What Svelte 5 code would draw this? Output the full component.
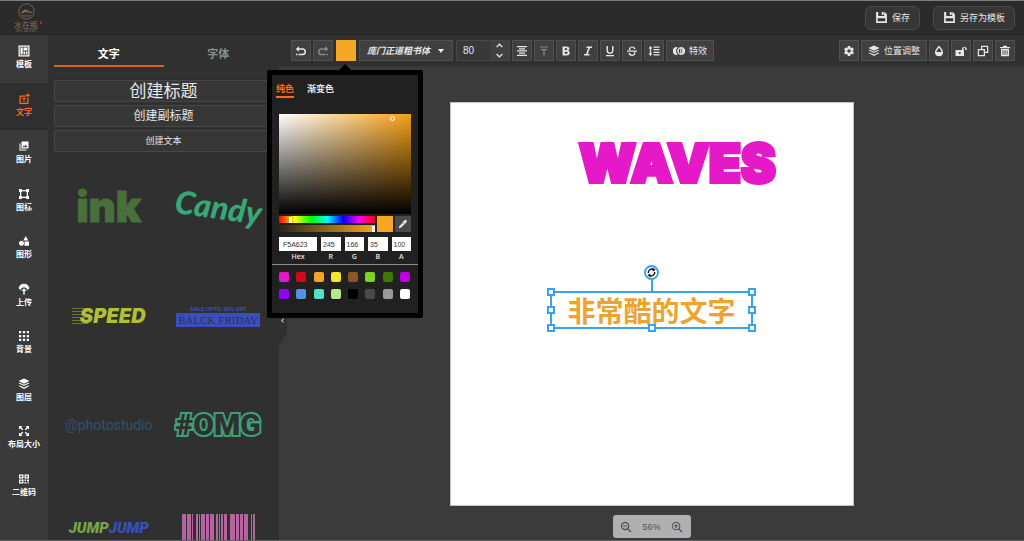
<script>
  const icons = {
    template: 'M1 1h22v22H1zM3.500 3.500v17h17v-17zM5 5h4.500v14H5zM11 5h8v6h-8zM11 13h3v6h-3zM15.500 13H19v6h-3.500z',
    text: 'M4 5h11v2.500H5.500v12h13V10H21v12H3V5zM18.500 1h2.500v2.500h2.500V6H21v2.500h-2.500V6H16V3.500h2.500zM8 9.500h8v2h-3V18h-2v-6.500H8z',
    image: 'M7 3h14v14H7zM3 7h2v12h12v2H3zM9 14.500h10l-3.500-5-2.500 3.500-1.500-2z',
    frame: 'M2 2h6v2h8V2h6v6h-2v8h2v6h-6v-2H8v2H2v-6h2V8H2zM8 6.500v1.500H6.500v8H8v1.500h8V16h1.500V8H16V6.500z',
    shapes: 'M15.500 2l5 9h-10zM7 11.500a5 5 0 1 0 .010 0zM13 13h9v8.500h-9z',
    upload: 'M12 1.500c5 0 9 3 11 8.500L19.500 14C17 10 15 8.500 12 8.500S7 10 4.500 14L1 10C3 4.500 7 1.500 12 1.500zM12 10.500l5.500 5.500h-4v7h-3v-7h-4z',
    background: 'M2 2h4.500v4.500H2zM9.750 2h4.500v4.500h-4.500zM17.500 2H22v4.500h-4.500zM2 9.750h4.500v4.500H2zM9.750 9.750h4.500v4.500h-4.500zM17.500 9.750H22v4.500h-4.500zM2 17.500h4.500V22H2zM9.750 17.500h4.500V22h-4.500zM17.500 17.500H22V22h-4.500z',
    layers: 'M12 1l11 5-11 5.500L1 6zM1 10.500l2.500-1L12 13.500l8.500-4 2.500 1-11 5.500zM1 16l2.500-1.200L12 19l8.500-4.200L23 16l-11 6z',
    resize: 'M2 2h7L6.500 4.500l4 4-2 2-4-4L2 9zM22 2v7l-2.500-2.500-4 4-2-2 4-4L15 2zM2 22v-7l2.500 2.500 4-4 2 2-4 4L9 22zM22 22h-7l2.500-2.500-4-4 2-2 4 4L22 15z',
    qr: 'M2 3h9v8H2zM4.500 5.500v3h4v-3zM13 3h9v8h-9zM15.500 5.500v3h4v-3zM2 13h9v8H2zM4.500 15.500v3h4v-3zM13 13h3v3h-3zM18 13h4v4h-4zM13 18h4v3h-4zM19 19h3v2h-3z',
    save: 'M2 2h4v7h11V2h1l4 4v16H2zM12.500 2H16v5.500h-3.500zM5 13.500v5.500h14v-5.500z',
    undo: 'M8 2.500v4h7a7 7 0 0 1 0 14H7v-3h8a4 4 0 0 0 0-8H8v4L1.500 8zM2 17.500h3v3H2z',
    redo: 'M16 2.500v4H9a7 7 0 0 0 0 14h8v-3H9a4 4 0 0 1 0-8h7v4L22.500 8zM19 17.500h3v3h-3z',
    align: 'M2 2h20v2.500H2zM6 6.300h12v2.500H6zM2 10.700h20v2.500H2zM6 15h12v2.500H6zM2 19.300h20v2.500H2z',
    textTop: 'M4 3h16v2H4zM6 8h12v2.500h-4.750V21h-2.500V10.500H6z',
    bold: 'M5 3h8.500c5.500 0 7 6 3 8.500 5 2.500 3.500 9.500-2.500 9.500H5zM9.500 6.500V10H13c2.200 0 2.200-3.500 0-3.500zM9.500 13.500v4H13.500c2.400 0 2.400-4 0-4z',
    italic: 'M9 3h11v3h-4l-4.500 12H15v3H4v-3h4L12.500 6H9z',
    underline: 'M5 2h3v9c0 5.500 8 5.500 8 0V2h3v9c0 9.500-14 9.500-14 0zM4 20h16v2.500H4z',
    strike: 'M2 11h20v2.500H2zM19 8h-3.500c0-4-7-4-7-.800 0 1 .5 1.800 1.500 2.800H6C3.500 1 19 .5 19 8zM5 16h3.500c.5 4.500 7.500 4 7.500 1 0-.800-.3-1.500-1-2.500h3.500C21 24 5 24.500 5 16z',
    spacing: 'M5 2l4 5H6.300v10H9l-4 5-4-5h2.700V7H1zM11 3h12v2.500H11zM11 8h12v2.500H11zM11 13.500h12V16H11zM11 18.500h12V21H11z',
    effect: 'M7.500 4a8 8 0 0 0 0 16c1 0 1.500-.2 2-.5a10 10 0 0 1 0-15C9 4.200 8.500 4 7.500 4zM16.500 4a8 8 0 1 0 .010 0zM14.500 7v10c-4-1-4-9 0-10zM17 7h1.500v10H17z',
    gear: 'M12 15.500A3.500 3.500 0 0 1 8.500 12 3.500 3.500 0 0 1 12 8.500a3.500 3.500 0 0 1 3.500 3.500 3.500 3.500 0 0 1-3.500 3.500m7.430-2.530c.04-.32.07-.64.07-.97s-.03-.66-.07-1l2.110-1.630c.19-.15.24-.42.12-.64l-2-3.460c-.12-.22-.39-.31-.61-.22l-2.490 1c-.52-.39-1.060-.73-1.690-.98l-.37-2.650A.506.506 0 0 0 14 2h-4c-.25 0-.46.18-.5.42l-.37 2.650c-.63.25-1.170.59-1.690.98l-2.490-1c-.22-.09-.49 0-.61.22l-2 3.460c-.13.22-.07.49.12.64L4.570 11c-.04.34-.07.67-.07 1s.03.65.07.97l-2.110 1.660c-.19.15-.25.42-.12.64l2 3.460c.12.22.39.3.61.22l2.490-1.010c.52.4 1.060.74 1.690.99l.37 2.650c.04.24.25.42.5.42h4c.25 0 .46-.18.5-.42l.37-2.650c.63-.26 1.170-.59 1.690-.99l2.490 1.010c.22.08.49 0 .61-.22l2-3.460c.12-.22.07-.49-.12-.64z',
    drop: 'M12 1c4 5 8 8.500 8 13.500a8 8 0 0 1-16 0C4 9.500 8 6 12 1zM12 5.500C9 9 7.200 11 6.800 14h10.400C16.800 11 15 9 12 5.500z',
    unlock: 'M1 10h13V7a5 5 0 0 1 9.500 0v3h-3V7c0-2.500-3.500-2.500-3.500 0v3h1v12H1zM9.500 14a2 2 0 1 0 .010 0z',
    copy: 'M8 1.500h14.500V16H16v6.500H1.500V8H8zM10.500 4v4H16v5.500h4V4zM4 10.500V20h9.500v-9.500z',
    trash: 'M8 1.500h8V4h6v2.500H2V4h6zM4 8h16v14.500H4zM7 10.500v9h1.700v-9zM11.100 10.500v9h1.800v-9zM15.300 10.500v9H17v-9z',
    picker: 'M17 2.500c2-2 6 2 4 4l-3.500 3.500 1 1-2 2-6-6 2-2 1 1zM11 9l4 4-7.500 7.500L3 22l-1-1 1.500-4.500z',
    zoomOut: 'M10 1.500a8.500 8.500 0 0 1 7 13.500l6 6-2 2-6-6A8.500 8.500 0 1 1 10 1.500zM10 4a6 6 0 1 0 .010 0zM6 9h8v2.200H6z',
    zoomIn: 'M10 1.500a8.500 8.500 0 0 1 7 13.500l6 6-2 2-6-6A8.500 8.500 0 1 1 10 1.500zM10 3.500a6.500 6.500 0 1 0 .010 0zM6 9h3V6h2.200v3h3v2.200h-3v3H9v-3H6z',
    up: 'M12 6l9 9-2.500 2.500L12 11l-6.500 6.500L3 15z',
    down: 'M12 18l9-9-2.500-2.500L12 13 5.500 6.500 3 9z',
    left: 'M7 12l8-8 2 2-6 6 6 6-2 2z'
  };

  const menu = [
    { icon: 'template', label: '模板' },
    { icon: 'text', label: '文字' },
    { icon: 'image', label: '图片' },
    { icon: 'frame', label: '图标' },
    { icon: 'shapes', label: '图形' },
    { icon: 'upload', label: '上传' },
    { icon: 'background', label: '背景' },
    { icon: 'layers', label: '图层' },
    { icon: 'resize', label: '布局大小' },
    { icon: 'qr', label: '二维码' }
  ];

  const formats = [
    ['align', '对齐'],
    ['textTop', '大小写'],
    ['bold', '加粗'],
    ['italic', '斜体'],
    ['underline', '下划线'],
    ['strike', '删除线'],
    ['spacing', '间距']
  ];

  const palette = [
    '#e619c8', '#d0091c', '#f0a52c', '#f4e42a', '#8b572a', '#7ed321', '#417505', '#bd00e0',
    '#9600ff', '#5590e2', '#50e3c2', '#b8e986', '#000000', '#4a4a4a', '#9b9b9b', '#ffffff'
  ];

  let active = $state('文字');
  let panelTab = $state('文字');
  let fillTab = $state('纯色');
  let fontSize = $state(80);
  let hue = $state(37);
  let alpha = $state(100);
  let color = $state('#F5A623');

  let hex = $derived(color.slice(1).toUpperCase());
  let rgb = $derived([0, 2, 4].map((i) => parseInt(hex.slice(i, i + 2), 16)));
</script>

{#snippet icon(name)}
  <svg class="icon" viewBox="0 0 24 24" aria-hidden="true">
    <path d={icons[name]} fill="currentColor" fill-rule="evenodd" />
  </svg>
{/snippet}

<div class="app">
  <header class="header">
    <a class="logo" href="#home">
      <svg viewBox="0 0 32 32" aria-hidden="true">
        <circle cx="16" cy="16" r="14.500" fill="none" stroke="currentColor" stroke-width="1.500" />
        <path d="M3 19c5-1 7-7 11-7 3 0 5 4 8 4s5 2 7 3c-5 0-8-2-11-1-2-3-3-2-5-1-3 2-6 3-10 2z" fill="currentColor" />
        <path d="M6 23h20M9 26h14" stroke="currentColor" stroke-width="1" />
      </svg>
      <span class="logo-name">水在瓶<i></i></span>
      <span class="logo-sub">SHUI ZAI PING</span>
    </a>
    <div class="header-actions">
      <button class="head-btn">{@render icon('save')}保存</button>
      <button class="head-btn">{@render icon('save')}另存为模板</button>
    </div>
  </header>

  <div class="body">
    <nav class="menu">
      {#each menu as item}
        <button class="menu-item" class:active={active === item.label} onclick={() => (active = item.label)}>
          {@render icon(item.icon)}
          <span>{item.label}</span>
        </button>
      {/each}
    </nav>

    <aside class="panel">
      <div class="panel-tabs">
        {#each ['文字', '字体'] as tab}
          <button class:active={panelTab === tab} onclick={() => (panelTab = tab)}>{tab}</button>
        {/each}
      </div>
      <div class="create">
        <button class="title">创建标题</button>
        <button class="subtitle">创建副标题</button>
        <button>创建文本</button>
      </div>
      <div class="samples">
        <button class="sample ink">ink</button>
        <button class="sample candy"><span>Candy</span></button>
        <button class="sample speed"><span>SPEED</span></button>
        <button class="sample friday">
          <small>SALE UPTO 30% OFF</small>
          <span>BALCK FRIDAY</span>
        </button>
        <button class="sample studio">@photostudio</button>
        <button class="sample omg">#OMG</button>
        <button class="sample jump"><span>JUMP</span><span>JUMP</span></button>
        <button class="sample barcode" aria-label="条码">
          <svg viewBox="0 0 73 40" aria-hidden="true">
            <path
              d="M0 0h4v40H0zM5 0h4v40H5zM10 0h1v40h-1zM14 0h2v40h-2zM17 0h1v40h-1zM19 0h4v40h-4zM24 0h3v40h-3zM28 0h4v40h-4zM34 0h2v40h-2zM37 0h1v40h-1zM39 0h2v40h-2zM42 0h3v40h-3zM48 0h5v40h-5zM54 0h3v40h-3zM58 0h3v40h-3zM62 0h4v40h-4zM69 0h1v40h-1zM71 0h2v40h-2z"
              fill="currentColor"
            />
          </svg>
        </button>
      </div>
      <button class="collapse" aria-label="收起">{@render icon('left')}</button>
    </aside>

    <main class="editor">
      <div class="toolbar">
        <div class="tools">
          <button class="tool" aria-label="撤销">{@render icon('undo')}</button>
          <button class="tool" aria-label="重做" disabled>{@render icon('redo')}</button>
          <div class="color-tool">
            <button class="tool fill" aria-label="颜色" style="background: {color}"></button>
            <div class="picker">
              <div class="picker-tabs">
                {#each ['纯色', '渐变色'] as tab}
                  <button class:active={fillTab === tab} onclick={() => (fillTab = tab)}>{tab}</button>
                {/each}
              </div>
              <div class="picker-main">
                <div class="shade" style="--hue: {hue}"><i></i></div>
                <div class="sliders">
                  <div class="ranges">
                    <input class="hue" type="range" min="0" max="360" bind:value={hue} aria-label="色相" />
                    <input class="alpha" type="range" min="0" max="100" bind:value={alpha} aria-label="透明度" />
                  </div>
                  <div class="current" style="background: {color}"></div>
                  <button class="dropper" aria-label="吸管">{@render icon('picker')}</button>
                </div>
                <div class="fields">
                  <label class="hex"><input value={hex} />Hex</label>
                  <label><input value={rgb[0]} />R</label>
                  <label><input value={rgb[1]} />G</label>
                  <label><input value={rgb[2]} />B</label>
                  <label><input value={alpha} />A</label>
                </div>
              </div>
              <div class="palette">
                {#each palette as swatch}
                  <button aria-label={swatch} style="background: {swatch}" onclick={() => (color = swatch)}></button>
                {/each}
              </div>
            </div>
          </div>
          <div class="font-tool">
            <select aria-label="字体">
              <option>庞门正道粗书体</option>
            </select>
          </div>
          <div class="size-tool">
            <input bind:value={fontSize} aria-label="字号" />
            <div class="steps">
              <button aria-label="增大" onclick={() => fontSize++}>{@render icon('up')}</button>
              <button aria-label="减小" onclick={() => fontSize--}>{@render icon('down')}</button>
            </div>
          </div>
          {#each formats as [name, label]}
            <button class="tool" class:dim={name === 'textTop'} aria-label={label}>{@render icon(name)}</button>
          {/each}
          <button class="tool wide">{@render icon('effect')}特效</button>
        </div>
        <div class="tools">
          <button class="tool" aria-label="设置">{@render icon('gear')}</button>
          <button class="tool wide">{@render icon('layers')}位置调整</button>
          <button class="tool" aria-label="透明度">{@render icon('drop')}</button>
          <button class="tool" aria-label="锁定">{@render icon('unlock')}</button>
          <button class="tool" aria-label="复制">{@render icon('copy')}</button>
          <button class="tool" aria-label="删除">{@render icon('trash')}</button>
        </div>
      </div>

      <div class="workspace">
        <div class="canvas">
          <div class="waves">WAVES</div>
          <div class="selection">
            <span>非常酷的文字</span>
            <i class="handle nw"></i><i class="handle ne"></i>
            <i class="handle w"></i><i class="handle e"></i>
            <i class="handle sw"></i><i class="handle s"></i><i class="handle se"></i>
            <button class="rotate" aria-label="旋转">
              <svg viewBox="0 0 24 24" aria-hidden="true">
                <path d="M5 13a7.500 7.500 0 0 1 11-7.500M19 11a7.500 7.500 0 0 1-11 7.500" fill="none" stroke="#111" stroke-width="3" />
                <path d="M14 1l7 5-6 4zM10 23l-7-5 6-4z" fill="#111" />
              </svg>
            </button>
          </div>
        </div>
        <div class="zoom">
          <button aria-label="缩小">{@render icon('zoomOut')}</button>
          <span>56%</span>
          <button aria-label="放大">{@render icon('zoomIn')}</button>
        </div>
      </div>
    </main>
  </div>
</div>

<style>
  :global(body) {
    background: #3b3b3b;
  }

  .app {
    box-sizing: border-box;
    display: flex;
    flex-direction: column;
    height: 100vh;
    overflow: hidden;
    border-top: 1px solid #7b807e;
    border-bottom: 1px solid #606066;
    background: #3b3b3b;
    color: #e6e6e6;
    font-family: "Open Sans", "Noto Sans CJK SC", sans-serif;
    font-size: 9px;
    line-height: 12px;
  }

  .app * {
    box-sizing: border-box;
  }

  button,
  input,
  select {
    margin: 0;
    padding: 0;
    border: 0;
    border-radius: 0;
    background: none;
    color: inherit;
    font: inherit;
  }

  .icon {
    display: block;
    flex: none;
    width: 12px;
    height: 12px;
  }

  /* Header */
  .header {
    display: flex;
    flex: none;
    align-items: center;
    justify-content: space-between;
    height: 34px;
    padding: 0 9px 0 14px;
    border-bottom: 1px solid #242424;
    background: #2b2b2b;
  }

  .logo {
    display: flex;
    flex-direction: column;
    align-items: center;
    color: #8d6f60;
    text-decoration: none;
  }

  .logo svg {
    width: 17px;
    height: 17px;
  }

  .logo-name {
    position: relative;
    font-family: "Noto Sans CJK SC", sans-serif;
    font-size: 8px;
    line-height: 9px;
  }

  .logo-name i {
    position: absolute;
    top: 1px;
    right: -4px;
    width: 2px;
    height: 3px;
    background: #a02a2a;
  }

  .logo-sub {
    font-size: 3px;
    line-height: 4px;
  }

  .header-actions {
    display: flex;
    gap: 13px;
  }

  .head-btn {
    display: flex;
    align-items: center;
    gap: 4px;
    height: 24px;
    padding: 0 9px;
    border: 1px solid #4a4a4a;
    border-radius: 6px;
    background: #363636;
  }

  .head-btn .icon {
    width: 13px;
    height: 13px;
  }

  /* Left menu */
  .body {
    display: flex;
    flex: 1;
    min-height: 0;
  }

  .menu {
    display: grid;
    grid-auto-rows: 1fr;
    flex: none;
    width: 48px;
    padding-bottom: 30px;
    background: #3a3a3a;
  }

  .menu-item {
    display: flex;
    flex-direction: column;
    align-items: center;
    justify-content: center;
    gap: 1px;
    padding-bottom: 2px;
    color: #fff;
    font-size: 8px;
    font-weight: 700;
  }

  .menu-item.active {
    background: #2f2f2f;
    color: #ff6a1a;
  }

  /* Text panel */
  .panel {
    position: relative;
    display: flex;
    flex: none;
    flex-direction: column;
    width: 231px;
    padding: 6px 6px 0;
    background: #303030;
  }

  .panel-tabs {
    display: grid;
    grid-template-columns: 1fr 1fr;
    padding-bottom: 6px;
    border-bottom: 1px solid #3a3a3a;
  }

  .panel-tabs button {
    height: 26px;
    padding-top: 2px;
    border-bottom: 2px solid transparent;
    color: #8e8e8e;
    font-size: 11px;
    font-weight: 700;
  }

  .panel-tabs .active {
    border-color: #d5611f;
    color: #fff;
  }

  .create {
    display: grid;
    gap: 3px;
    padding-top: 6px;
  }

  .create button {
    height: 22px;
    border: 1px solid #474747;
    border-radius: 2px;
    background: #373737;
  }

  .create .title {
    font-size: 17px;
    line-height: 20px;
  }

  .create .subtitle {
    font-size: 12px;
  }

  .samples {
    display: grid;
    grid-template-columns: 1fr 1fr;
    grid-auto-rows: 109px;
    flex: 1;
    min-height: 0;
    overflow: hidden;
  }

  .sample {
    display: flex;
    align-items: center;
    justify-content: center;
    min-width: 0;
    white-space: nowrap;
  }

  .ink {
    color: #486f3c;
    font-family: Inter, sans-serif;
    font-size: 42px;
    font-weight: 900;
    line-height: 48px;
    -webkit-text-stroke: 1px #486f3c;
  }

  .candy {
    color: #37a877;
    font-family: Lato, sans-serif;
    font-size: 32px;
    font-style: italic;
    font-weight: 900;
    line-height: 36px;
  }

  .candy span {
    transform: rotate(8deg);
  }

  .speed span {
    padding: 3px 0 3px 8px;
    background: repeating-linear-gradient(#6c7530 0 1px, transparent 1px 3px) left / 16px 16px no-repeat;
    color: #b0bf35;
    font-family: Inter, sans-serif;
    font-size: 20px;
    font-style: italic;
    font-weight: 900;
  }

  .friday {
    flex-direction: column;
    color: #3a50b8;
  }

  .friday small {
    font-family: Roboto, sans-serif;
    font-size: 6px;
    font-weight: 700;
    line-height: 8px;
  }

  .friday span {
    padding: 1px 2px;
    background: #3a50b8;
    color: #29315f;
    font-family: "Liberation Serif", serif;
    font-size: 11px;
  }

  .studio {
    color: #34506a;
    font-family: Roboto, sans-serif;
    font-size: 14px;
  }

  .omg {
    color: #303030;
    font-family: Roboto, sans-serif;
    font-size: 30px;
    font-weight: 900;
    line-height: 36px;
    paint-order: stroke fill;
    -webkit-text-stroke: 4px #3ca177;
  }

  .jump {
    padding-bottom: 12px;
    color: #3750c0;
    font-family: Roboto, sans-serif;
    font-size: 15px;
    font-style: italic;
    font-weight: 900;
  }

  .jump span:first-child {
    color: #75a647;
  }

  .barcode {
    color: #b5649f;
  }

  .barcode svg {
    width: 73px;
    height: 40px;
  }

  .collapse {
    position: absolute;
    z-index: 1;
    top: 260px;
    left: 100%;
    width: 8px;
    height: 50px;
    background: #303030;
    clip-path: polygon(0 0, 100% 8px, 100% 38px, 0 100%);
  }

  .collapse .icon {
    width: 7px;
    height: 7px;
  }

  /* Toolbar */
  .editor {
    display: flex;
    flex: 1;
    flex-direction: column;
    min-width: 0;
  }

  .toolbar {
    display: flex;
    flex: none;
    align-items: center;
    justify-content: space-between;
    height: 32px;
    padding: 0 9px 0 12px;
    border-bottom: 1px solid #393939;
    background: #303030;
  }

  .tools {
    display: flex;
    gap: 2px;
  }

  .tool {
    display: flex;
    align-items: center;
    justify-content: center;
    gap: 4px;
    width: 20px;
    height: 21px;
    border: 1px solid #505050;
    background: #404040;
  }

  .tool:disabled,
  .tool.dim {
    color: #888;
  }

  .tool.wide {
    width: auto;
    padding: 0 6px;
  }

  .tool.fill {
    border: 0;
  }

  .color-tool {
    position: relative;
    margin: 0 1px;
  }

  .font-tool {
    position: relative;
    width: 94px;
    margin-right: 1px;
  }

  .font-tool select {
    width: 100%;
    height: 21px;
    padding-left: 7px;
    border: 1px solid #505050;
    background: #404040;
    font-family: "Noto Sans CJK SC", sans-serif;
    font-style: italic;
    font-weight: 700;
    appearance: none;
  }

  .font-tool::after {
    position: absolute;
    top: 9px;
    right: 9px;
    border: 3px solid transparent;
    border-top: 4px solid #eee;
    border-bottom: 0;
    content: "";
  }

  .size-tool {
    display: flex;
    height: 21px;
    border: 1px solid #484848;
  }

  .size-tool input {
    width: 33px;
    padding-left: 6px;
    background: #393939;
    font-family: "Liberation Sans", sans-serif;
    font-size: 10px;
  }

  .steps {
    display: grid;
    width: 19px;
    background: #404040;
  }

  .steps button {
    display: grid;
    place-items: center;
  }

  .steps .icon {
    width: 9px;
    height: 9px;
  }

  /* Color picker */
  .picker {
    position: absolute;
    z-index: 2;
    top: 30px;
    left: -69px;
    width: 156px;
    border: 5px solid #000;
    border-radius: 2px;
    background: #212121;
  }

  .picker::before {
    position: absolute;
    top: -11px;
    left: 66px;
    border: 7px solid transparent;
    border-top: 0;
    border-bottom-color: #000;
    content: "";
  }

  .picker-tabs {
    display: flex;
    gap: 13px;
    padding: 6px 4px 0;
    font-weight: 700;
  }

  .picker-tabs button {
    height: 17px;
    border-bottom: 2px solid transparent;
  }

  .picker-tabs .active {
    border-color: #ff6a1a;
    color: #ff6a1a;
  }

  .picker-main {
    display: grid;
    gap: 2px;
    padding: 16px 7px 0;
    border-bottom: 1px solid #8a8a8a;
  }

  .shade {
    position: relative;
    height: 100px;
    background:
      linear-gradient(transparent, #000),
      linear-gradient(to right, #fff, hsl(var(--hue) 92% 52%));
  }

  .shade i {
    position: absolute;
    top: 2px;
    left: 84%;
    width: 5px;
    height: 5px;
    border: 1px solid #fff;
    border-radius: 50%;
  }

  .sliders {
    display: flex;
    gap: 2px;
  }

  .ranges {
    display: grid;
    flex: 1;
    gap: 2px;
    min-width: 0;
  }

  .ranges input {
    width: 100%;
    height: 7px;
    appearance: none;
  }

  .ranges input::-webkit-slider-thumb {
    width: 3px;
    height: 6px;
    background: #fff;
    appearance: none;
  }

  .hue {
    background: linear-gradient(to right, #f00, #ff0, #0f0, #0ff, #00f, #f0f, #f00);
  }

  .alpha {
    background: linear-gradient(to right, #2a251d, #f5a623);
  }

  .current,
  .dropper {
    width: 16px;
    height: 16px;
  }

  .dropper {
    display: grid;
    place-items: center;
    background: #4a4a4a;
  }

  .dropper .icon {
    width: 10px;
    height: 10px;
  }

  .fields {
    display: grid;
    grid-template-columns: 38px repeat(4, 1fr);
    gap: 4px;
    padding: 3px 0 1px;
  }

  .fields label {
    display: grid;
    font-size: 7px;
    font-weight: 600;
    text-align: center;
  }

  .fields input {
    width: 100%;
    height: 14px;
    padding-left: 2px;
    background: #fff;
    color: #333;
    font-family: "Liberation Sans", sans-serif;
    font-weight: 400;
  }

  .fields .hex input {
    padding-left: 4px;
  }

  .palette {
    display: grid;
    grid-template-columns: repeat(8, 10px);
    gap: 7px;
    justify-content: space-between;
    padding: 7px 8px 14px 7px;
  }

  .palette button {
    height: 10px;
    border-radius: 2px;
  }

  /* Canvas */
  .workspace {
    position: relative;
    display: flex;
    flex: 1;
    align-items: center;
    justify-content: center;
    min-height: 0;
    padding: 35px 34px 34px;
  }

  .canvas {
    position: relative;
    height: 100%;
    aspect-ratio: 1;
    border: 1px solid #c4c4c4;
    background: #fff;
  }

  .waves {
    position: absolute;
    top: 10%;
    left: 32%;
    color: #e619c8;
    font-family: Inter, sans-serif;
    font-size: 52px;
    font-weight: 900;
    line-height: 42px;
    -webkit-text-stroke: 4px #e619c8;
  }

  .selection {
    position: absolute;
    bottom: 44%;
    left: 25%;
    display: grid;
    place-items: center;
    width: 50%;
    height: 9%;
    outline: 2px solid #3aa0f0;
    outline-offset: -1px;
    color: #eba52f;
    font-family: "Noto Sans CJK SC", sans-serif;
    font-size: 28px;
    font-weight: 700;
    line-height: 32px;
    white-space: nowrap;
  }

  .handle {
    position: absolute;
    width: 8px;
    height: 8px;
    margin: -4px;
    border: 2px solid #3aa0f0;
    background: #fff;
  }

  .nw,
  .ne {
    top: 0;
  }

  .w,
  .e {
    top: 50%;
  }

  .sw,
  .s,
  .se {
    top: 100%;
  }

  .nw,
  .w,
  .sw {
    left: 0;
  }

  .s {
    left: 50%;
  }

  .ne,
  .e,
  .se {
    left: 100%;
  }

  .rotate {
    position: absolute;
    bottom: calc(100% + 12px);
    left: 50%;
    width: 15px;
    height: 15px;
    margin-left: -8px;
    border: 2px solid #3aa0f0;
    border-radius: 50%;
    background: #fff;
  }

  .rotate svg {
    display: block;
    width: 11px;
    height: 11px;
  }

  .rotate::after {
    position: absolute;
    top: 100%;
    left: 5px;
    width: 2px;
    height: 13px;
    background: #3aa0f0;
    content: "";
  }

  .zoom {
    position: absolute;
    bottom: 2px;
    left: 50%;
    display: flex;
    align-items: center;
    justify-content: space-between;
    width: 78px;
    height: 23px;
    margin-left: -39px;
    padding: 0 7px;
    border-radius: 3px;
    background: #b0b0b0;
    color: #4c535c;
    font-family: "Liberation Sans", sans-serif;
  }
</style>
